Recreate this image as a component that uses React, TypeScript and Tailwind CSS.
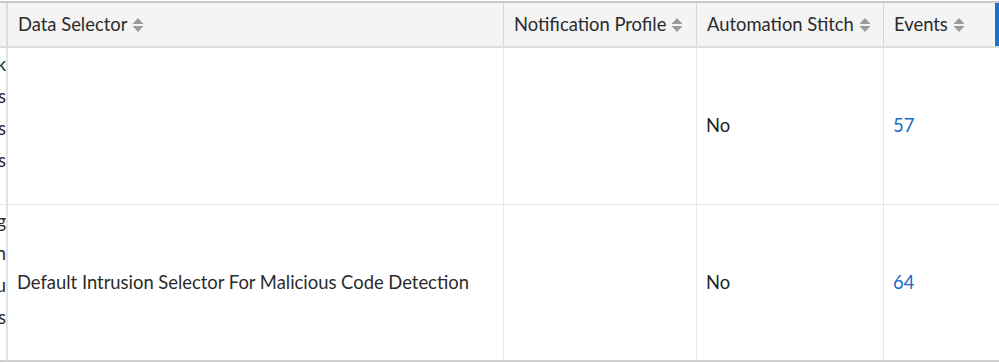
import React from "react";

function SortIcon() {
  return (
    <svg width="12" height="16" viewBox="0 0 12 16" className="ml-[5px] shrink-0">
      <path d="M6 1 L11.5 7 H0.5 Z" fill="#9a9a9a" />
      <path d="M6 15 L11.5 9 H0.5 Z" fill="#9a9a9a" />
    </svg>
  );
}

function HeaderCell({ label, className }: { label: string; className: string }) {
  return (
    <div className={`flex items-center pl-[10px] border-r border-[#d6d6d6] ${className}`}>
      <span>{label}</span>
      <SortIcon />
    </div>
  );
}

function LeftCell({ lines }: { lines: string[] }) {
  return (
    <div className="w-[8px] shrink-0 border-r-2 border-[#e2e2e2] overflow-hidden flex flex-col justify-start items-end">
      {lines.map((l, i) => (
        <div key={i} className="leading-[32px] whitespace-nowrap">
          {l}
        </div>
      ))}
    </div>
  );
}

function Row({ left, selector, num }: { left: string[]; selector: string; num: string }) {
  return (
    <div className="flex h-[157px] border-b border-[#e6e6e6]">
      <LeftCell lines={left} />
      <div className="w-[496px] shrink-0 border-r border-[#e6e6e6] flex items-center pl-[9px]">
        {selector}
      </div>
      <div className="w-[193px] shrink-0 border-r border-[#e6e6e6]" />
      <div className="w-[187px] shrink-0 border-r border-[#e6e6e6] flex items-center pl-[9px] text-[#222]">
        No
      </div>
      <div className="flex-1 flex items-center pl-[9px] text-[#1569c7]">{num}</div>
    </div>
  );
}

export default function App() {
  return (
    <div
      className="w-[999px] h-[363px] bg-white overflow-hidden text-[18.4px] text-[#2b2b2b]"
      style={{ fontFamily: "Lato, 'Open Sans', sans-serif" }}
    >
      <div className="h-[2px] bg-[#c8c8c8] mt-[1px]" />
      <div className="flex h-[45px] bg-[#f4f4f4] border-b-2 border-[#dcdcdc]">
        <div className="w-[8px] shrink-0 border-r-2 border-[#dcdcdc]" />
        <HeaderCell label="Data Selector" className="w-[496px] shrink-0" />
        <HeaderCell label="Notification Profile" className="w-[193px] shrink-0" />
        <HeaderCell label="Automation Stitch" className="w-[187px] shrink-0" />
        <div className="flex-1 flex items-center pl-[10px]">
          <span>Events</span>
          <SortIcon />
        </div>
        <div className="w-[4px] bg-[#1a73c8] shrink-0" />
      </div>
      <Row left={["k", "s", "is", "s"]} selector="" num="57" />
      <Row
        left={["g", "n", "u", "s"]}
        selector="Default Intrusion Selector For Malicious Code Detection"
        num="64"
      />
      <div className="h-[2px] bg-[#d0d0d0] -mt-[2px]" />
    </div>
  );
}
